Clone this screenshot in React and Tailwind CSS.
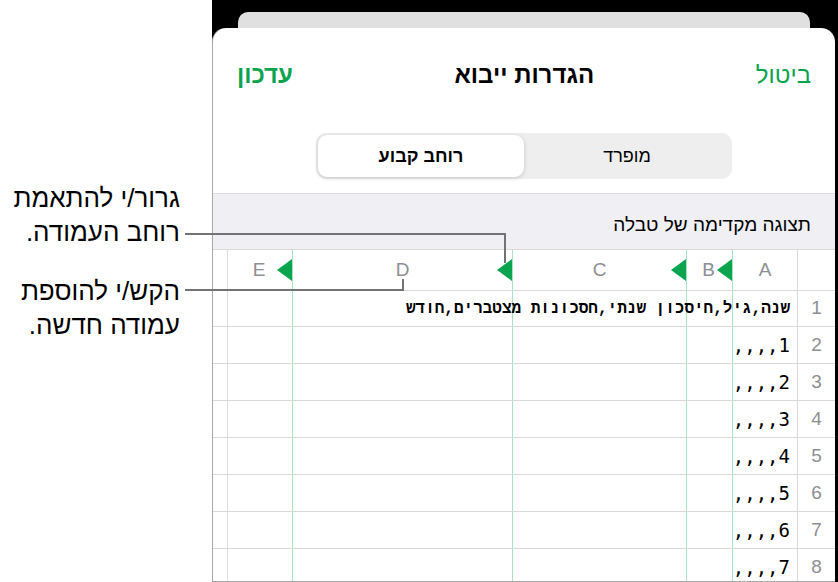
import React from "react";

const GREEN = "#0aa44f";

const rows = [
  "שנה,גיל,חיסכון שנתי,חסכונות מצטברים,חודש",
  "1,,,,",
  "2,,,,",
  "3,,,,",
  "4,,,,",
  "5,,,,",
  "6,,,,",
  "7,,,,",
];

// left-pointing handle that sits on a column edge
const Handle = () => (
  <svg
    className="absolute right-0 top-1/2 -translate-y-1/2"
    width="15"
    height="22"
    viewBox="0 0 15 22"
  >
    <path d="M15 0 L0 11 L15 22 Z" fill={GREEN} />
  </svg>
);

const HeaderRow = () => (
  <div className="flex h-[42px] border-y border-[#d9d9d9] text-[19px] text-[#8e8e93]">
    <div className="w-[15px] shrink-0 border-r border-[#dcdcdc]" />
    <div className="relative w-[65px] shrink-0 border-r border-[#a9e2c2] flex items-center justify-center">
      <span className="pr-[2px]">E</span>
      <Handle />
    </div>
    <div className="relative w-[220px] shrink-0 border-r border-[#a9e2c2] flex items-center justify-center">
      <span>D</span>
      <Handle />
    </div>
    <div className="relative w-[174px] shrink-0 border-r border-[#a9e2c2] flex items-center justify-center">
      <span>C</span>
      <Handle />
    </div>
    <div className="relative w-[46px] shrink-0 border-r border-[#a9e2c2] flex items-center justify-center">
      <span className="pr-[2px]">B</span>
      <Handle />
    </div>
    <div className="w-[65px] shrink-0 border-r border-[#d9d9d9] flex items-center justify-center">
      <span>A</span>
    </div>
    <div className="flex-1" />
  </div>
);

const DataRow = ({ n, text }) => (
  <div
    className={`flex shrink-0 border-b border-[#d9d9d9] ${
      n === 1 ? "h-[36px]" : "h-[37px]"
    }`}
  >
    <div className="w-[15px] shrink-0 border-r border-[#dcdcdc]" />
    <div className="w-[65px] shrink-0 border-r border-[#a9e2c2]" />
    <div className="w-[220px] shrink-0 border-r border-[#a9e2c2]" />
    <div className="w-[174px] shrink-0 border-r border-[#a9e2c2]" />
    <div className="w-[46px] shrink-0 border-r border-[#a9e2c2]" />
    <div className="w-[65px] shrink-0 border-r border-[#d9d9d9] flex items-center justify-end pr-[7px]">
      <span
        dir="rtl"
        className={`whitespace-pre text-black ${
          n === 1
            ? "font-['Liberation_Mono',monospace] text-[16px] font-bold"
            : "font-['DejaVu_Sans_Mono',monospace] text-[19px]"
        }`}
      >
        {text}
      </span>
    </div>
    <div className="flex-1 flex items-center justify-center text-[19px] text-[#8e8e93]">
      {n}
    </div>
  </div>
);

export default function App() {
  return (
    <div className="relative flex h-[582px] w-[838px] overflow-hidden bg-white font-['Liberation_Sans',Arial,sans-serif]">
      {/* callouts */}
      <div dir="rtl" className="w-[212px] shrink-0 pt-[181px] pr-[32px] text-[26px] leading-[34px] text-black">
        <p>
          גרור/י להתאמת
          <br />
          רוחב העמודה.
        </p>
        <p className="mt-[25px]">
          הקש/י להוספת
          <br />
          עמודה חדשה.
        </p>
      </div>

      {/* device */}
      <div className="flex-1 flex flex-col bg-black">
        <div className="ml-[26px] mr-[28px] mt-[12px] h-[16px] shrink-0 rounded-t-[10px] bg-[#e0e0e0]" />
        <div className="mr-[3px] flex-1 flex flex-col overflow-hidden rounded-t-[14px] border-l border-b border-[#a8a8a8] bg-white">
          <div className="flex h-[94px] shrink-0 items-center justify-between px-[24px] text-[24px]">
            <span className="font-bold" style={{ color: GREEN }}>עדכון</span>
            <span className="font-bold text-black">הגדרות ייבוא</span>
            <span style={{ color: GREEN }}>ביטול</span>
          </div>

          <div className="flex shrink-0 justify-center pt-[11px] pb-[14px]">
            <div className="flex h-[46px] w-[416px] rounded-[10px] bg-[#eeeeef] p-[2px] text-[18px] text-black">
              <div className="flex flex-1 items-center justify-center rounded-[9px] bg-white font-bold shadow-[0_1px_4px_rgba(0,0,0,0.18)]">
                רוחב קבוע
              </div>
              <div className="flex flex-1 items-center justify-center">מופרד</div>
            </div>
          </div>

          <div className="flex h-[56px] shrink-0 items-end justify-end border-t border-[#dcdce0] bg-[#efeff4] pr-[24px] pb-[10px] text-[19px] text-black">
            <span dir="rtl">תצוגה מקדימה של טבלה</span>
          </div>

          <div className="flex flex-col bg-white">
            <HeaderRow />
            {rows.map((t, i) => (
              <DataRow key={i} n={i + 1} text={t} />
            ))}
          </div>
        </div>
      </div>

      {/* leader lines */}
      <div className="absolute left-[185px] top-[233px] h-[2px] w-[321px] bg-[#737373]" />
      <div className="absolute left-[504px] top-[233px] h-[30px] w-[2px] bg-[#737373]" />
      <div className="absolute left-[185px] top-[289px] h-[2px] w-[219px] bg-[#737373]" />
      <div className="absolute left-[402px] top-[279px] h-[12px] w-[2px] bg-[#737373]" />
    </div>
  );
}
